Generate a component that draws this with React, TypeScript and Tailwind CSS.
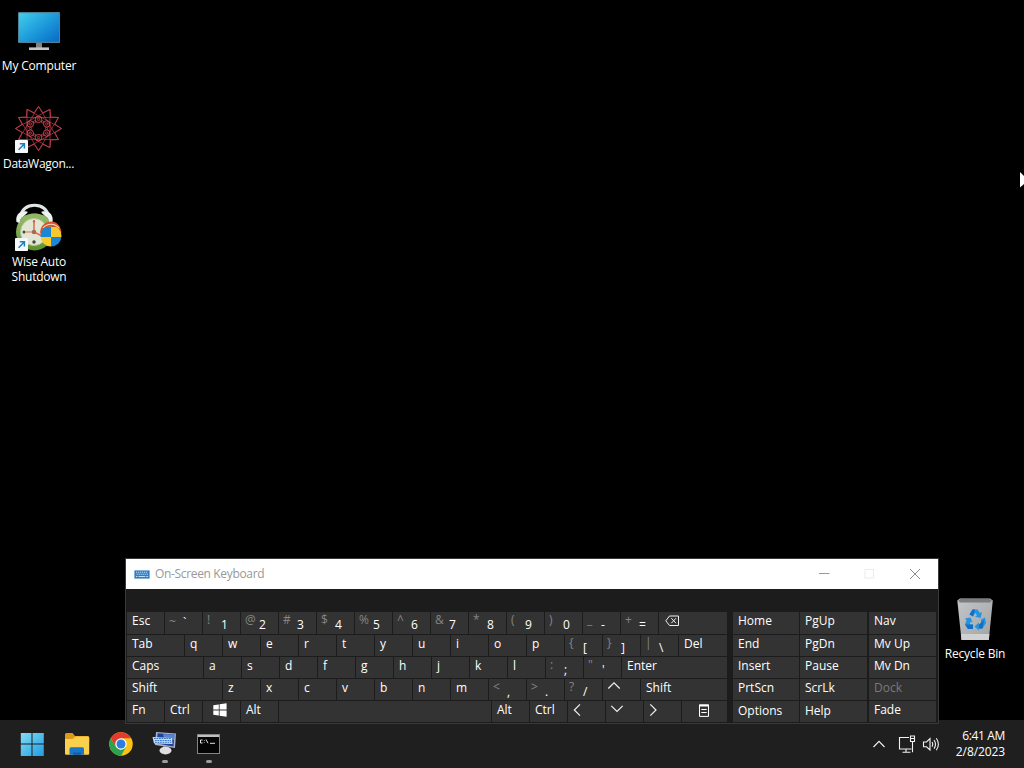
import React from "react";

type KeyDef = {
  w: string;
  label?: string;
  shift?: string;
  icon?: React.ReactNode;
};

const K = "w-[38px]";

const Chevron = ({ d, cls }: { d: string; cls: string }) => (
  <svg width="14" height="14" viewBox="0 0 14 14" fill="none" stroke="#f0f0f0" strokeWidth="1.2" className={cls}>
    <path d={d} />
  </svg>
);

const WinKey = () => (
  <svg width="14" height="14" viewBox="0 0 14 14" fill="#fff" className="ml-[10px] mt-[2px]">
    <path d="M0.3 2.2 L5.8 1.4 V6.6 H0.3Z M6.6 1.3 L13.6 0.3 V6.6 H6.6Z M0.3 7.4 H5.8 V12.6 L0.3 11.8Z M6.6 7.4 H13.6 V13.7 L6.6 12.7Z" />
  </svg>
);

const Backspace = () => (
  <svg width="15" height="12" viewBox="0 0 15 12" fill="none" stroke="#f0f0f0" strokeWidth="1" className="ml-[6px] mt-[3px]">
    <path d="M4.5 1 H13.5 V10.5 H4.5 L0.8 5.8Z M6.3 3.2 L11 8.2 M11 3.2 L6.3 8.2" />
  </svg>
);

const MenuKey = () => (
  <svg width="10" height="13" viewBox="0 0 10 13" fill="none" stroke="#fff" className="ml-[17px] mt-[3px]">
    <path d="M0.5 1 H9.5 V12.4 H0.5Z" />
    <path d="M0 1.5 H10" strokeWidth="2" />
    <path d="M2.3 5.5 H7.7 M2.3 8.5 H7.7" strokeWidth="1.2" />
  </svg>
);

const rows: KeyDef[][] = [
  [
    { w: "w-[38px]", label: "Esc" },
    { w: K, label: "`", shift: "~" },
    { w: K, label: "1", shift: "!" },
    { w: K, label: "2", shift: "@" },
    { w: K, label: "3", shift: "#" },
    { w: K, label: "4", shift: "$" },
    { w: K, label: "5", shift: "%" },
    { w: K, label: "6", shift: "^" },
    { w: K, label: "7", shift: "&" },
    { w: K, label: "8", shift: "*" },
    { w: K, label: "9", shift: "(" },
    { w: K, label: "0", shift: ")" },
    { w: K, label: "-", shift: "_" },
    { w: K, label: "=", shift: "+" },
    { w: "flex-1", icon: <Backspace /> },
  ],
  [
    { w: "w-[58px]", label: "Tab" },
    ..."qwertyuiop".split("").map((label) => ({ w: K, label })),
    { w: K, label: "[", shift: "{" },
    { w: K, label: "]", shift: "}" },
    { w: K, label: "\\", shift: "|" },
    { w: "flex-1", label: "Del" },
  ],
  [
    { w: "w-[77px]", label: "Caps" },
    ..."asdfghjkl".split("").map((label) => ({ w: K, label })),
    { w: K, label: ";", shift: ":" },
    { w: K, label: "'", shift: '"' },
    { w: "flex-1", label: "Enter" },
  ],
  [
    { w: "w-[96px]", label: "Shift" },
    ..."zxcvbnm".split("").map((label) => ({ w: K, label })),
    { w: K, label: ",", shift: "<" },
    { w: K, label: ".", shift: ">" },
    { w: K, label: "/", shift: "?" },
    { w: K, icon: <Chevron d="M1.3 9.5 L7 3.8 L12.7 9.5" cls="ml-[4px]" /> },
    { w: "flex-1", label: "Shift" },
  ],
  [
    { w: "w-[38px]", label: "Fn" },
    { w: K, label: "Ctrl" },
    { w: K, icon: <WinKey /> },
    { w: K, label: "Alt" },
    { w: "w-[213px]" },
    { w: K, label: "Alt" },
    { w: K, label: "Ctrl" },
    { w: K, icon: <Chevron d="M10 1.3 L4.3 7 L10 12.7" cls="ml-[2px] mt-[2px]" /> },
    { w: K, icon: <Chevron d="M1.3 3.8 L7 9.5 L12.7 3.8" cls="ml-[4px] mt-[1px]" /> },
    { w: K, icon: <Chevron d="M4.3 1.3 L10 7 L4.3 12.7" cls="ml-[2px] mt-[2px]" /> },
    { w: "flex-1", icon: <MenuKey /> },
  ],
];

const side = [
  ["Home", "PgUp", "Nav"],
  ["End", "PgDn", "Mv Up"],
  ["Insert", "Pause", "Mv Dn"],
  ["PrtScn", "ScrLk", "Dock"],
  ["Options", "Help", "Fade"],
];

function Key({ k }: { k: KeyDef }) {
  const tick = k.label === "`";
  return (
    <div className={`${k.w} flex shrink-0 items-start overflow-hidden border-r border-b border-[#1c1c1c] bg-[#333333]`}>
      {k.icon}
      {k.shift && (
        <span className={`ml-[4px] w-[14px] shrink-0 leading-4 text-[#858585] ${tick ? "mt-[2px]" : ""}`}>
          {k.shift}
        </span>
      )}
      {k.label && (
        <span
          className={
            k.shift
              ? tick
                ? "mt-[3px] leading-4"
                : "mt-[5px] leading-4"
              : "ml-[5px] mt-px leading-4 whitespace-nowrap"
          }
        >
          {k.label}
        </span>
      )}
    </div>
  );
}

function SideKey({ label, w, low }: { label: string; w: string; low?: boolean }) {
  return (
    <div
      className={`${w} flex items-start border-b border-[#1c1c1c] bg-[#333333] leading-4 ${low ? "pt-[2px]" : "pt-px"} ${label === "Dock" ? "text-[#7a7a7a]" : ""}`}
    >
      {label}
    </div>
  );
}

function Keyboard() {
  return (
    <section className="absolute left-[125px] top-[558px] flex h-[166px] w-[814px] flex-col border border-[#3a3a3a] bg-[#1c1c1c] text-[12px] text-white">
      <header className="flex h-[30px] shrink-0 items-center bg-white text-[#999999]">
        <svg width="16" height="9" viewBox="0 0 16 9" className="ml-[8px]">
          <rect x="0.4" y="0.4" width="15.2" height="8.2" fill="#2f7dc4" />
          <path d="M2 2.2 H14 M2.6 4.2 H14" stroke="#d6eaf8" strokeWidth="0.9" strokeDasharray="1.2 0.8" />
          <path d="M2 6.5 H3.5 M4.5 6.5 H11.3 M12.3 6.5 H14" stroke="#d6eaf8" strokeWidth="0.9" />
        </svg>
        <h1 className="ml-[5px] grow tracking-[-0.34px]">On-Screen Keyboard</h1>
        <svg width="104" height="12" viewBox="0 0 104 12" fill="none" className="mr-[16px]">
          <path d="M1 5.500 H11.500" stroke="#999" />
          <rect x="47" y="1.500" width="8.500" height="8.500" stroke="#ececec" />
          <path d="M92 1 L102 11 M102 1 L92 11" stroke="#8c8c8c" />
        </svg>
      </header>
      <div className="mt-[23px] ml-px flex">
        <div className="grid w-[601px] grid-rows-[23px_22px_22px_22px_22px]">
          {rows.map((r, i) => (
            <div key={i} className="flex">
              {r.map((k, j) => (
                <Key key={j} k={k} />
              ))}
            </div>
          ))}
        </div>
        <div className="ml-[5px] grid grid-rows-[23px_22px_22px_22px_22px]">
          {side.map((r, i) => (
            <div key={i} className="flex">
              <SideKey label={r[0]} w="w-[67px] border-r pl-[5px]" low={i === 4} />
              <SideKey label={r[1]} w="w-[67px] pl-[5px]" low={i === 4} />
              <div className="w-[2px]" />
              <SideKey label={r[2]} w="w-[67px] pl-[5px]" />
            </div>
          ))}
        </div>
      </div>
    </section>
  );
}

const Shortcut = () => (
  <svg width="13" height="13" viewBox="0 0 13 13" className="absolute bottom-0 left-0">
    <rect width="13" height="13" rx="0.8" fill="#f6f8fa" />
    <path d="M3.6 9.8 L9 4.2 M4.8 3.8 H9.4 V8.4" stroke="#1b7fc0" strokeWidth="1.5" fill="none" />
  </svg>
);

function MonitorIcon() {
  return (
    <svg width="42" height="39" viewBox="0 0 42 39">
      <defs>
        <linearGradient id="scr" x1="0" y1="0" x2="1" y2="0.9">
          <stop offset="0" stopColor="#43cdea" />
          <stop offset="0.5" stopColor="#209fdc" />
          <stop offset="1" stopColor="#0a6fc8" />
        </linearGradient>
      </defs>
      <rect x="0" y="0" width="42" height="31" rx="0.8" fill="#4d8296" />
      <rect x="1" y="1.2" width="40" height="28.6" fill="url(#scr)" />
      <path d="M18 31 H24 V36 H18Z" fill="#7f8386" />
      <rect x="11" y="35.4" width="20" height="2.6" fill="#c3c6c8" />
    </svg>
  );
}

function StarIcon() {
  const pts = (n: number, r: number, off: number) =>
    Array.from({ length: n }, (_, i) => {
      const a = ((i * 360) / n + off) * (Math.PI / 180);
      return [23.5 + r * Math.cos(a), 22.5 + r * 0.96 * Math.sin(a)];
    });
  const star = (n: number, step: number, r: number, off: number) => {
    const p = pts(n, r, off);
    return p.map((a, i) => `M${a[0]} ${a[1]} L${p[(i + step) % n][0]} ${p[(i + step) % n][1]}`).join(" ");
  };
  const tips = pts(12, 23, 0);
  const valleys = pts(12, 17, 15);
  const outline = tips.map((t, i) => `${t[0]},${t[1]} ${valleys[i][0]},${valleys[i][1]}`).join(" ");
  return (
    <svg width="47" height="46" viewBox="0 0 47 46" fill="none" stroke="#cf4350">
      <polygon points={outline} strokeWidth="0.8" />
      <path d={star(12, 4, 23, 0)} strokeWidth="0.65" />
      {pts(6, 9.5, 30).map(([x, y], i) => (
        <g key={i}>
          <circle cx={x} cy={y} r="3.2" strokeWidth="1" />
          <circle cx={x} cy={y} r="1.2" strokeWidth="0.8" />
        </g>
      ))}
      {pts(6, 8, 0).map(([x, y], i) => (
        <circle key={i} cx={x} cy={y} r="1.1" strokeWidth="0.8" />
      ))}
    </svg>
  );
}

function ClockIcon() {
  return (
    <svg width="47" height="48" viewBox="0 0 47 48">
      <defs>
        <linearGradient id="body" x1="0" y1="0" x2="0" y2="1">
          <stop offset="0" stopColor="#9dc070" />
          <stop offset="1" stopColor="#5d902e" />
        </linearGradient>
        <clipPath id="shield">
          <circle cx="36" cy="33" r="10.5" />
        </clipPath>
      </defs>
      <ellipse cx="19.5" cy="29" rx="18.5" ry="18.5" fill="url(#body)" />
      <path d="M5 14 C7 6 12 2.300 19.500 2.300 C27 2.300 32 6 34 14" fill="none" stroke="#dfe6e4" strokeWidth="3" />
      <path d="M1.500 19 C0 12 5 7 12 8.500 C15 9.500 5 14 4.500 20Z M37.500 19 C39 12 34 7 27 8.500 C24 9.500 34 14 34.500 20Z" fill="#eef2f2" />
      <path d="M5 17 C8 8.500 31 8.500 34 17 C30 20 9 20 5 17Z" fill="#8fb665" />
      <circle cx="19" cy="29" r="13.500" fill="#e2e6d4" stroke="#b7c49b" strokeWidth="1" />
      <path d="M19 17 V29 L29 34" stroke="#df7054" strokeWidth="1.6" fill="none" />
      <path d="M19 29 H11" stroke="#df7054" strokeWidth="1" />
      <circle cx="19" cy="29" r="2.2" fill="#a4694f" />
      <circle cx="9" cy="29" r="1.5" fill="#41483a" />
      <circle cx="19" cy="39" r="1.7" fill="#41483a" />
      <circle cx="19" cy="18.5" r="1.2" fill="#c46a50" />
      <path d="M25 31 C25 22 31 18.5 36 18.5 C42 18.5 46 23 46.5 30 L42 27 C38 22 32 23 29 27Z" fill="#d9552b" />
      <path d="M28 25 C32 20 40 20 44 25" fill="none" stroke="#f4d9bd" strokeWidth="1.2" />
      <g clipPath="url(#shield)">
        <path d="M25 24 H36 V34 H25Z M36 34 H47 V46 H36Z" fill="#1c86d4" />
        <path d="M36 24 H47 V34 H36Z M25 34 H36 V46 H25Z" fill="#f7c92b" />
      </g>
    </svg>
  );
}

function BinIcon() {
  return (
    <svg width="36" height="43" viewBox="0 0 36 43">
      <defs>
        <linearGradient id="bin" x1="0" y1="0" x2="1" y2="1">
          <stop offset="0" stopColor="#c4c7c9" />
          <stop offset="1" stopColor="#a0a2a4" />
        </linearGradient>
      </defs>
      <path d="M0.3 2.5 L3 0.5 H33 L35.8 2.5 L31.8 42 H4.500Z" fill="url(#bin)" />
      <path d="M1 2.8 L3.5 1 H32.5 L35 2.8 L33 4.5 H3Z" fill="#7a7e80" />
      <path d="M4 36 H32.4 L31.8 42 H4.5Z" fill="#d0d1d2" />
      <g fill="#2394e3">
        <path d="M12.5 16.5 L15.5 11.5 H20.5 L23 15 L25 14 L23.7 20 L18 18.7 L20 17.3 L18.2 15 L16 18.5Z" />
        <path d="M24 21.5 L28 19.5 L29 25 L25.5 30.5 H22 V32.5 L17.5 28.5 L22 24.5 V26.5 H24Z" />
        <path d="M8 20.5 L13.5 19.5 L15.5 24.5 L13.5 23.8 L12.7 26.5 H16 V31 H11 L8 26.5 L9.5 22.5Z" />
      </g>
      <path d="M12.5 16.5 L15.5 11.5 H18 L16 18.5Z M22 26.5 L27 22 L25.5 30.5 H22Z M11 31 L8 26.5 L12.7 26.5 H16 V31Z" fill="#126fc4" />
    </svg>
  );
}

const labelCls = "text-center text-[12px] leading-[15px] text-white";

function Taskbar() {
  return (
    <footer className="flex h-12 items-center bg-[#1f1f1f] text-[12px] text-white">
      <svg width="24" height="24" viewBox="0 0 24 24" className="ml-[20px]">
        <defs>
          <linearGradient id="win" x1="0" y1="0" x2="1" y2="1">
            <stop offset="0" stopColor="#83dcf6" />
            <stop offset="1" stopColor="#1f9de0" />
          </linearGradient>
        </defs>
        <path d="M0.8 1 H11.5 V11.5 H0.8Z M12.5 1 H23.8 V11.5 H12.5Z M0.8 12.5 H11.5 V24 H0.8Z M12.5 12.5 H23.8 V24 H12.5Z" fill="url(#win)" />
      </svg>
      <svg width="26" height="24" viewBox="0 0 26 24" className="ml-[20px]">
        <path d="M1 2.5 Q1 1 2.5 1 H8.5 L11 4 H24 Q25.2 4 25.2 5.5 V10 H1Z" fill="#dc9b18" />
        <path d="M1 7 H8.5 L11.5 4.5 H24 Q25.2 4.5 25.2 6 V21.5 Q25.2 22.8 24 22.8 H2.2 Q1 22.8 1 21.5Z" fill="#fbd04c" />
        <path d="M5.500 22.8 V17 Q5.5 15.3 7.2 15.3 H18.5 Q20 15.3 20 17 V22.8Z" fill="#1976c8" />
        <path d="M9 22.8 V20.5 H17 V22.8Z" fill="#135da5" />
      </svg>
      <svg width="24" height="24" viewBox="0 0 48 48" className="ml-[19px]">
        <circle cx="24" cy="24" r="23.5" fill="#fbc116" />
        <path d="M24 12.5 H44.5 A23.5 23.5 0 0 0 3.65 12.25 L14 30Z" fill="#e33b2e" />
        <path d="M3.65 12.25 A23.5 23.5 0 0 0 24 47.5 L34 30 L24 35 L14 30Z" fill="#2ba24c" />
        <circle cx="24" cy="24" r="11.5" fill="#fff" />
        <circle cx="24" cy="24" r="9" fill="#2a7de1" />
      </svg>
      <div className="ml-[19px] flex h-12 w-[26px] flex-col items-center pt-[11px]">
        <svg width="26" height="25" viewBox="0 0 26 25">
          <path d="M4 1 L24 2.5 L23 17 L3 14Z" fill="#aab3ca" />
          <path d="M5.5 2.2 L22.5 3.6 L21.5 15.5 L5 12.5Z" fill="#233f96" />
          <path d="M11 3 L22.5 3.6 L22 9 L12 8Z" fill="#5d82cf" />
          <path d="M0.5 6 L20 7 L20.5 13 L2 12.5Z" fill="#c7dcf3" />
          <path d="M2 7.5 H19 M3 9.5 H19 M3 11.3 H19.5" stroke="#3578c7" strokeWidth="1" strokeDasharray="1.8 0.7" />
          <path d="M11 15 H17 V18 H11Z" fill="#8b8d98" />
          <ellipse cx="13.5" cy="19.6" rx="6" ry="3.9" fill="#dedde2" />
        </svg>
        <span className="mt-[4px] h-[3px] w-[6px] rounded-full bg-[#9d9d9d]" />
      </div>
      <div className="ml-[18px] flex h-12 w-[24px] flex-col items-center pt-[14px]">
        <svg width="23" height="20" viewBox="0 0 23 20">
          <rect x="0.5" y="0.5" width="22" height="19" fill="#050505" stroke="#858585" />
          <rect x="1" y="1" width="21" height="2" fill="#c0c0c0" />
          <path d="M5.6 6 H3.5 V9 H5.6 M7.3 6.3 V7 M7.3 8.3 V9 M9 5.5 L11 9.2 M13 9.3 H18" stroke="#e2e2e2" strokeWidth="1" fill="none" />
        </svg>
        <span className="mt-[6px] ml-px h-[3px] w-[6px] rounded-full bg-[#9d9d9d]" />
      </div>
      <div className="grow" />
      <svg width="68" height="20" viewBox="0 0 68 20" fill="none" stroke="#f2f2f2" strokeWidth="1.1">
        <path d="M1.5 13 L7 7.3 L12.5 13" />
        <path d="M37 3.5 H27.5 V15 H39.5 M34 15 V18 M30.5 18.2 H38.5 M38.5 2 H42.5 V7.500 H38.5Z M40.5 7.500 V18.2 M38.5 4.500 H42.5" />
        <path d="M51.5 8 H54.5 L58 4.5 V16 L54.5 12.8 H51.5Z M60 8 Q61.5 10.3 60 12.6 M62 6 Q65 10.3 62 14.6 M64.3 4.3 Q68.5 10.3 64.3 16.3" />
      </svg>
      <div className="mr-[19px] w-[65px] text-right leading-4">
        <div className="tracking-[-0.35px]">6:41 AM</div>
        <div className="tracking-[-0.1px]">2/8/2023</div>
      </div>
    </footer>
  );
}

export default function App() {
  return (
    <div
      className="relative flex h-screen w-screen flex-col overflow-hidden bg-black"
      style={{ fontFamily: '"Open Sans", "Noto Sans", sans-serif' }}
    >
      <main className="relative grow">
        <div className="absolute left-0 top-[12px] flex w-[78px] flex-col items-center">
          <MonitorIcon />
          <span className={`${labelCls} mt-[7px] whitespace-nowrap tracking-[-0.18px]`}>My Computer</span>
        </div>
        <div className="absolute left-0 top-[106px] flex w-[77px] flex-col items-center">
          <div className="relative h-[47px] w-[47px]">
            <StarIcon />
            <Shortcut />
          </div>
          <span className={`${labelCls} mt-[3px] whitespace-nowrap tracking-[-0.3px]`}>DataWagon...</span>
        </div>
        <div className="absolute left-0 top-[203px] flex w-[77px] flex-col items-center">
          <div className="relative h-[48px] w-[47px]">
            <ClockIcon />
            <Shortcut />
          </div>
          <span className={`${labelCls} mt-[3px] ml-px tracking-[-0.25px]`}>
            Wise Auto
            <br />
            Shutdown
          </span>
        </div>
        <div className="absolute left-[936px] top-[598px] flex w-[78px] flex-col items-center">
          <BinIcon />
          <span className={`${labelCls} mt-[5px] whitespace-nowrap tracking-[-0.2px]`}>Recycle Bin</span>
        </div>
        <svg width="4" height="16" viewBox="0 0 4 16" className="absolute right-0 top-[172px]">
          <path d="M0 0 L4 4 V12 L0 15.5Z" fill="#fff" />
        </svg>
      </main>
      <Taskbar />
      <Keyboard />
    </div>
  );
}
